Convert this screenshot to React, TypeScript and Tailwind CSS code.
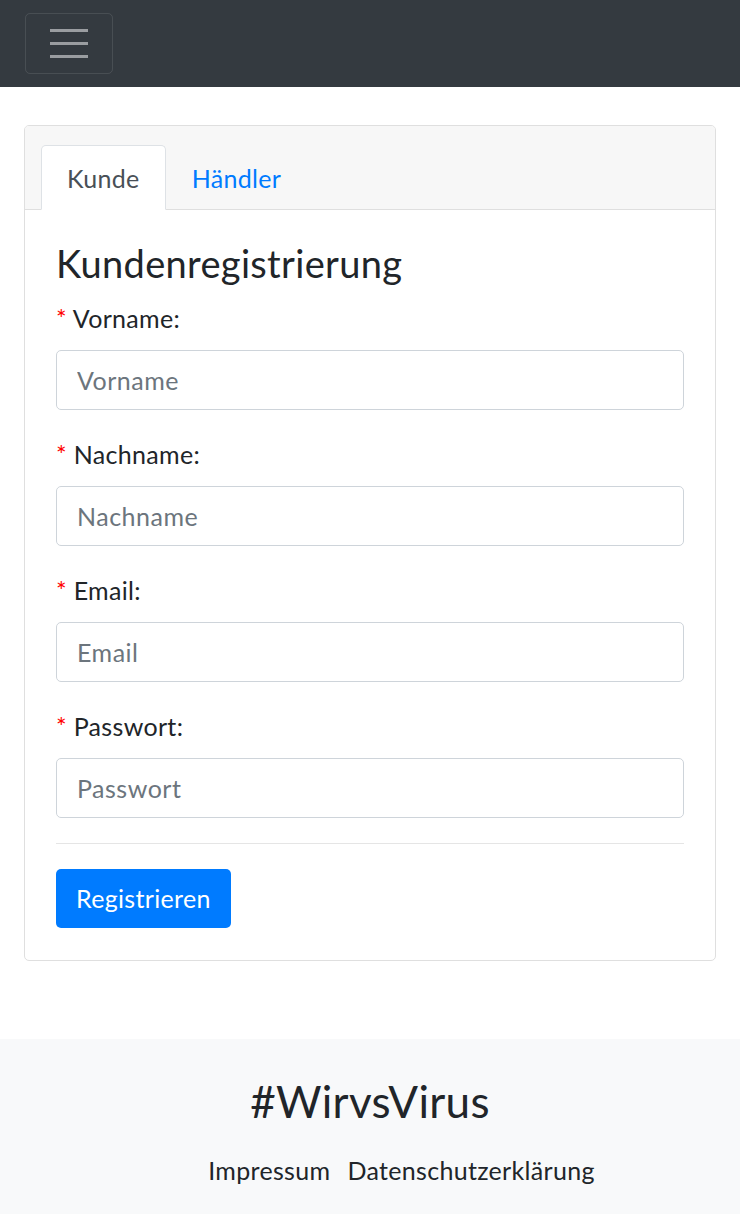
import { useState } from 'react'

const font = { fontFamily: 'Lato, "Noto Sans", sans-serif' }

function Field({ label, type = 'text' }: { label: string; type?: string }) {
  return (
    <div className="mb-[25px]">
      <label className="block text-[25px] leading-[38px] mb-[13px] text-[#212529]">
        <span className="text-[#ff0000]">*</span> {label}:
      </label>
      <input
        type={type}
        placeholder={label}
        className="block w-full h-[60px] px-[20px] text-[25px] tracking-[0.02em] text-[#495057] bg-white border border-[#ced4da] rounded-[5px] placeholder:text-[#6c757d] outline-none"
      />
    </div>
  )
}

export default function App() {
  const [tab, setTab] = useState<'kunde' | 'haendler'>('kunde')

  return (
    <div className="min-h-screen bg-white flex flex-col tracking-[0.02em]" style={font}>
      {/* Navbar */}
      <nav className="h-[87px] bg-[#343a40] px-[25px] flex items-center">
        <button
          type="button"
          className="w-[88px] h-[61px] border border-white/10 rounded-[5px] flex flex-col items-center justify-center gap-[10.5px]"
        >
          <span className="block w-[38px] h-[2.5px] bg-[#9a9da1]" />
          <span className="block w-[38px] h-[2.5px] bg-[#9a9da1]" />
          <span className="block w-[38px] h-[2.5px] bg-[#9a9da1]" />
        </button>
      </nav>

      <main className="px-[24px] pt-[38px] pb-[78px]">
        <div className="border border-[#dfdfdf] rounded-[5px] overflow-hidden">
          {/* Tabs header */}
          <div className="bg-[#f7f7f7] border-b border-[#dfdfdf] px-[16px] pt-[19px] flex">
            <button
              type="button"
              onClick={() => setTab('kunde')}
              className={`h-[65px] -mb-px px-[25px] text-[25px] leading-[38px] rounded-t-[5px] border ${
                tab === 'kunde'
                  ? 'bg-white border-[#dee2e6] border-b-white text-[#495057]'
                  : 'border-transparent text-[#007bff]'
              }`}
            >
              Kunde
            </button>
            <button
              type="button"
              onClick={() => setTab('haendler')}
              className={`h-[65px] -mb-px px-[25px] text-[25px] leading-[38px] rounded-t-[5px] border ${
                tab === 'haendler'
                  ? 'bg-white border-[#dee2e6] border-b-white text-[#495057]'
                  : 'border-transparent text-[#007bff]'
              }`}
            >
              Händler
            </button>
          </div>

          {/* Body */}
          <div className="px-[31px] pt-[30px] pb-[32px]">
            <h4 className="text-[38px] leading-[46px] mb-[13px] text-[#212529]">Kundenregistrierung</h4>
            <Field label="Vorname" />
            <Field label="Nachname" />
            <Field label="Email" type="email" />
            <Field label="Passwort" type="password" />
            <hr className="border-t border-[#e5e5e5] mb-[25px]" />
            <button
              type="button"
              className="h-[59px] px-[20px] bg-[#007bff] text-white text-[25px] rounded-[5px]"
            >
              Registrieren
            </button>
          </div>
        </div>
      </main>

      {/* Footer */}
      <footer className="bg-[#f8f9fa] flex-1 pt-[36px] pb-[20px] text-center text-[#212529]">
        <h3 className="text-[44px] leading-[53px] mb-[23px]">#WirvsVirus</h3>
        <ul className="flex justify-center gap-[17px] pl-[63px] text-[25px] leading-[38px]">
          <li>
            <a href="#">Impressum</a>
          </li>
          <li>
            <a href="#">Datenschutzerklärung</a>
          </li>
        </ul>
      </footer>
    </div>
  )
}
